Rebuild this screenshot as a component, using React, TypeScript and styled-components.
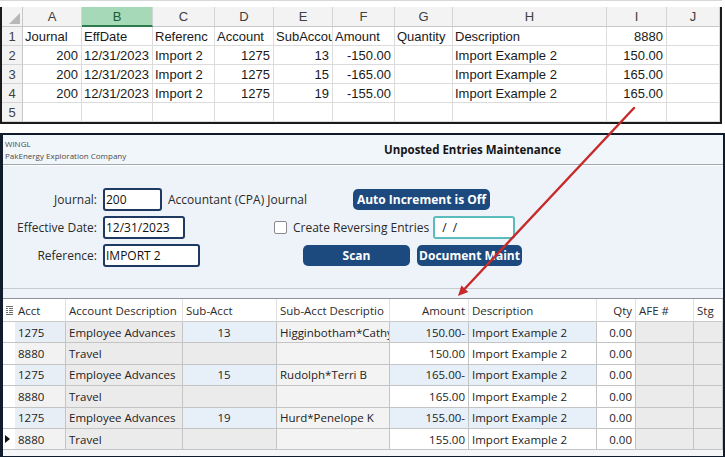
import styled, { createGlobalStyle } from "styled-components";

const GlobalStyle = createGlobalStyle`
  html, body {
    margin: 0;
    padding: 0;
    background: #ffffff;
  }
  body {
    font-family: "Open Sans", "Noto Sans", sans-serif;
  }
`;

const Page = styled.div`
  position: relative;
  width: 725px;
  height: 457px;
  overflow: hidden;
  background: #ffffff;
`;

/* ---------- spreadsheet ---------- */

const SheetFrame = styled.div`
  padding-top: 6px;
  border-top: 1px solid #d8d8d8;
  width: 722px;
`;

const Sheet = styled.div`
  display: grid;
  grid-template-columns: 21px 59px 71px 62px 59px 59px 62px 58px 154px 60px 53px;
  grid-template-rows: 20px repeat(5, 19px);
  border: 2px solid #1b1b1b;
  border-top: none;
  font-family: "Liberation Sans", Arial, sans-serif;
  font-size: 13px;
  color: #1a1a1a;
  background: #ffffff;
`;

const ColHead = styled.div<{ $selected?: boolean }>`
  display: flex;
  align-items: center;
  justify-content: center;
  background: ${(p) => (p.$selected ? "#a6d9b8" : "#f3f3f3")};
  color: ${(p) => (p.$selected ? "#1b5a34" : "#404040")};
  border-right: 1px solid #d4d4d4;
  border-bottom: ${(p) => (p.$selected ? "2px solid #2c7a4b" : "1px solid #c8c8c8")};
  box-sizing: border-box;
`;

const Corner = styled.div`
  position: relative;
  background: #f3f3f3;
  border-right: 1px solid #c8c8c8;
  border-bottom: 1px solid #c8c8c8;
  box-sizing: border-box;

  &::after {
    content: "";
    position: absolute;
    right: 2px;
    bottom: 2px;
    border-left: 11px solid transparent;
    border-bottom: 11px solid #b8b8b8;
  }
`;

const RowHead = styled.div`
  display: flex;
  align-items: center;
  justify-content: center;
  background: #f3f3f3;
  color: #404040;
  border-right: 1px solid #c8c8c8;
  border-bottom: 1px solid #d4d4d4;
  box-sizing: border-box;
`;

const SheetCell = styled.div<{ $right?: boolean }>`
  display: flex;
  align-items: center;
  justify-content: ${(p) => (p.$right ? "flex-end" : "flex-start")};
  padding: 0 3px 0 2px;
  white-space: nowrap;
  overflow: hidden;
  border-right: 1px solid #dcdcdc;
  border-bottom: 1px solid #dcdcdc;
  box-sizing: border-box;
`;

/* ---------- application window ---------- */

const Window = styled.div`
  margin-top: 9px;
  height: 325px;
  border: 2px solid #101c2c;
  border-left-width: 3px;
  background: #eef3f9;
  display: flex;
  flex-direction: column;
  box-sizing: border-box;
  color: #1e1e1e;
`;

const TitleBar = styled.div`
  display: grid;
  grid-template-columns: 381px auto;
  align-items: center;
  height: 29px;
  background: #f1f6fb;
  border-bottom: 1px solid #a3a8ae;
  box-shadow: 0 1px 0 #ffffff;
`;

const Company = styled.div`
  padding-left: 2px;
  font-size: 8px;
  line-height: 12px;
  color: #4a4a4a;
`;

const Title = styled.div`
  font-size: 11.5px;
  font-weight: 700;
  color: #151515;
`;

const Form = styled.div`
  display: flex;
  flex-direction: column;
  gap: 5px;
  height: 124px;
  padding-top: 23px;
  box-sizing: border-box;
  border-bottom: 1px solid #c6cbd1;
  font-size: 12px;
`;

const FormRow = styled.div`
  display: flex;
  align-items: center;
  height: 23px;
`;

const FieldLabel = styled.div`
  width: 94px;
  text-align: right;
  color: #2a2a2a;
`;

const TextBox = styled.div<{ $w: number; $ml?: number; $teal?: boolean }>`
  width: ${(p) => p.$w}px;
  margin-left: ${(p) => p.$ml ?? 6}px;
  height: 23px;
  box-sizing: border-box;
  border: 2px solid ${(p) => (p.$teal ? "#5bbcbc" : "#1e3a63")};
  border-radius: 3px;
  background: #ffffff;
  padding-left: 1px;
  line-height: 19px;
  color: #111111;
  white-space: nowrap;
`;

const Caption = styled.div<{ $w?: number; $ml?: number }>`
  margin-left: ${(p) => p.$ml ?? 6}px;
  width: ${(p) => (p.$w ? `${p.$w}px` : "auto")};
  color: #2a2a2a;
  white-space: nowrap;
`;

const Check = styled.div<{ $ml: number }>`
  margin-left: ${(p) => p.$ml}px;
  width: 13px;
  height: 13px;
  box-sizing: border-box;
  border: 1px solid #8a8a8a;
  border-radius: 2px;
  background: #ffffff;
`;

const ActionButton = styled.div<{ $w: number; $ml: number }>`
  width: ${(p) => p.$w}px;
  margin-left: ${(p) => p.$ml}px;
  height: 21px;
  border-radius: 5px;
  background: #1d4a7e;
  color: #ffffff;
  font-weight: 700;
  font-size: 12px;
  display: flex;
  align-items: center;
  justify-content: center;
  white-space: nowrap;
`;

/* ---------- data grid ---------- */

const GridArea = styled.div`
  margin-top: 9px;
  border-top: 1px solid #8e949b;
  flex: 1;
  background: #f4f6f8;
  font-size: 11.5px;
`;

const Grid = styled.div`
  display: grid;
  grid-template-columns: 12px 51px 117px 94px 113px 79px 128px 39px 58px 29px;
  grid-template-rows: 23px repeat(6, 21.4px);
`;

const HeadCell = styled.div<{ $right?: boolean }>`
  display: flex;
  align-items: center;
  justify-content: ${(p) => (p.$right ? "flex-end" : "flex-start")};
  padding: 0 3px;
  background: #ffffff;
  color: #2b2b2b;
  border-right: 1px solid #e2e2e2;
  border-bottom: 1px solid #c9c9c9;
  white-space: nowrap;
  overflow: hidden;
  box-sizing: border-box;
`;

const Cell = styled.div<{ $bg: string; $align?: string }>`
  display: flex;
  align-items: center;
  justify-content: ${(p) => p.$align ?? "flex-start"};
  padding: 0 ${(p) => (p.$align === "center" ? "14px" : "3px")} 0 3px;
  background: ${(p) => p.$bg};
  color: #222222;
  border-right: 1px solid #c4c4c4;
  border-bottom: 1px solid #c4c4c4;
  white-space: nowrap;
  overflow: hidden;
  box-sizing: border-box;
`;

const Indicator = styled.div`
  display: flex;
  align-items: center;
  justify-content: center;
  background: #ffffff;
  border-bottom: 1px solid #c9c9c9;
`;

const RowMark = styled.div`
  display: flex;
  align-items: center;
  justify-content: flex-start;
  padding-left: 2px;
  background: #ffffff;
  border-bottom: 1px solid #c4c4c4;
`;

const Arrow = styled.svg`
  position: absolute;
  left: 0;
  top: 0;
  pointer-events: none;
`;

type Kind = "acct" | "edit" | "ro" | "light" | "white";

const columns: { title: string; kind: Kind; align?: string; headRight?: boolean }[] = [
  { title: "Acct", kind: "acct" },
  { title: "Account Description", kind: "ro" },
  { title: "Sub-Acct", kind: "edit", align: "center" },
  { title: "Sub-Acct Descriptio", kind: "light" },
  { title: "Amount", kind: "edit", align: "flex-end", headRight: true },
  { title: "Description", kind: "edit" },
  { title: "Qty", kind: "white", align: "flex-end", headRight: true },
  { title: "AFE #", kind: "ro" },
  { title: "Stg", kind: "ro" },
];

const entries = [
  ["1275", "Employee Advances", "13", "Higginbotham*Cathy", "150.00-", "Import Example 2", "0.00", "", ""],
  ["8880", "Travel", "", "", "150.00", "Import Example 2", "0.00", "", ""],
  ["1275", "Employee Advances", "15", "Rudolph*Terri B", "165.00-", "Import Example 2", "0.00", "", ""],
  ["8880", "Travel", "", "", "165.00", "Import Example 2", "0.00", "", ""],
  ["1275", "Employee Advances", "19", "Hurd*Penelope K", "155.00-", "Import Example 2", "0.00", "", ""],
  ["8880", "Travel", "", "", "155.00", "Import Example 2", "0.00", "", ""],
];

const sheetCols = ["A", "B", "C", "D", "E", "F", "G", "H", "I", "J"];

const sheetRows: { v: string; r?: boolean }[][] = [
  [
    { v: "Journal" },
    { v: "EffDate" },
    { v: "Referenc" },
    { v: "Account" },
    { v: "SubAccou" },
    { v: "Amount" },
    { v: "Quantity" },
    { v: "Description" },
    { v: "8880", r: true },
    { v: "" },
  ],
  ...[
    ["13", "-150.00", "150.00"],
    ["15", "-165.00", "165.00"],
    ["19", "-155.00", "165.00"],
  ].map(([sub, amt, other]) => [
    { v: "200", r: true },
    { v: "12/31/2023", r: true },
    { v: "Import 2" },
    { v: "1275", r: true },
    { v: sub, r: true },
    { v: amt, r: true },
    { v: "" },
    { v: "Import Example 2" },
    { v: other, r: true },
    { v: "" },
  ]),
  Array.from({ length: 10 }, () => ({ v: "" })),
];

function cellColor(kind: Kind, row: number, value: string, col: number) {
  const tinted = row % 2 === 0;
  if (kind === "ro") return "#ebebeb";
  if (kind === "light") return "#f3f3f3";
  if (kind === "white") return "#ffffff";
  if (kind === "acct") return tinted ? "#e7eef6" : "#f2f2f2";
  if (col === 2 && !value) return "#ebebeb";
  return tinted ? "#e7f0f9" : "#ffffff";
}

export default function App() {
  return (
    <Page>
      <GlobalStyle />

      <SheetFrame>
        <Sheet>
          <Corner />
          {sheetCols.map((c) => (
            <ColHead key={c} $selected={c === "B"}>
              {c}
            </ColHead>
          ))}
          {sheetRows.map((row, i) => (
            <>
              <RowHead key={`h${i}`}>{i + 1}</RowHead>
              {row.map((cell, j) => (
                <SheetCell key={`${i}-${j}`} $right={cell.r}>
                  {cell.v}
                </SheetCell>
              ))}
            </>
          ))}
        </Sheet>
      </SheetFrame>

      <Window>
        <TitleBar>
          <Company>
            <div>WINGL</div>
            <div>PakEnergy Exploration Company</div>
          </Company>
          <Title>Unposted Entries Maintenance</Title>
        </TitleBar>

        <Form>
          <FormRow>
            <FieldLabel>Journal:</FieldLabel>
            <TextBox $w={59}>200</TextBox>
            <Caption $w={185}>Accountant (CPA) Journal</Caption>
            <ActionButton $w={137} $ml={0}>
              Auto Increment is Off
            </ActionButton>
          </FormRow>
          <FormRow>
            <FieldLabel>Effective Date:</FieldLabel>
            <TextBox $w={82}>12/31/2023</TextBox>
            <Check $ml={89} />
            <Caption $w={134}>Create Reversing Entries</Caption>
            <TextBox $w={82} $ml={6} $teal>
              &nbsp;&nbsp;/&nbsp;&nbsp;/
            </TextBox>
          </FormRow>
          <FormRow>
            <FieldLabel>Reference:</FieldLabel>
            <TextBox $w={97}>IMPORT 2</TextBox>
            <ActionButton $w={107} $ml={103}>
              Scan
            </ActionButton>
            <ActionButton $w={105} $ml={7}>
              Document Maint
            </ActionButton>
          </FormRow>
        </Form>

        <GridArea>
          <Grid>
            <Indicator>
              <svg width="7" height="9" viewBox="0 0 7 9">
                <g fill="#6b6b6b">
                  <rect x="0" y="0" width="7" height="1" />
                  <rect x="0" y="2" width="2" height="1" />
                  <rect x="3" y="2" width="4" height="1" />
                  <rect x="0" y="4" width="2" height="1" />
                  <rect x="3" y="4" width="4" height="1" />
                  <rect x="0" y="6" width="2" height="1" />
                  <rect x="3" y="6" width="4" height="1" />
                  <rect x="0" y="8" width="7" height="1" />
                </g>
              </svg>
            </Indicator>
            {columns.map((c) => (
              <HeadCell key={c.title} $right={c.headRight}>
                {c.title}
              </HeadCell>
            ))}
            {entries.map((row, i) => (
              <>
                <RowMark key={`m${i}`}>
                  {i === entries.length - 1 && (
                    <svg width="5" height="8" viewBox="0 0 5 8">
                      <path d="M0 0 L5 4 L0 8 Z" fill="#111" />
                    </svg>
                  )}
                </RowMark>
                {row.map((v, j) => (
                  <Cell
                    key={`${i}-${j}`}
                    $bg={cellColor(columns[j].kind, i, v, j)}
                    $align={columns[j].align}
                  >
                    {v}
                  </Cell>
                ))}
              </>
            ))}
          </Grid>
        </GridArea>
      </Window>

      <Arrow width="725" height="457" viewBox="0 0 725 457">
        <line x1="634" y1="108" x2="465" y2="288.5" stroke="#c62b2b" strokeWidth="2.4" strokeLinecap="round" />
        <path d="M458 296 L468.3 292 L461.4 285.4 Z" fill="#c62b2b" />
      </Arrow>
    </Page>
  );
}
